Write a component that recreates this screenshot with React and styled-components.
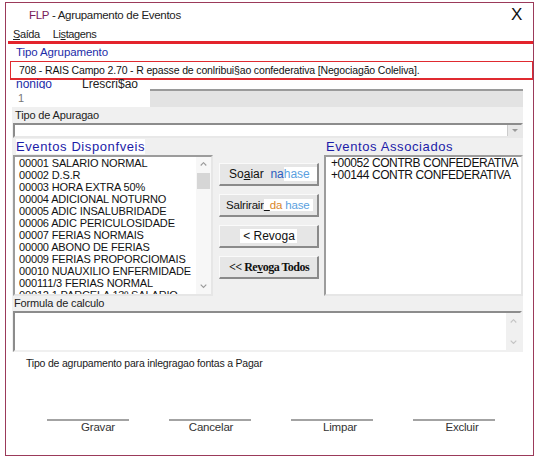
import React from 'react';
import styled, { createGlobalStyle } from 'styled-components';

const Global = createGlobalStyle`
  html, body {
    margin: 0;
    padding: 0;
    background: #fff;
  }
  body {
    font-family: "Liberation Sans", Arial, sans-serif;
    color: #1a1a1a;
  }
`;

const Window = styled.div`
  box-sizing: border-box;
  width: 529px;
  height: 454px;
  margin: 2px 0 0 5px;
  border: 1px solid #9b3a5a;
  background: #fff;
  display: flex;
  flex-direction: column;
`;

const TitleBar = styled.div`
  height: 23px;
  display: flex;
  align-items: center;
  justify-content: space-between;
  padding: 0 11px 0 23px;
  font-size: 11.5px;
  letter-spacing: -0.3px;
  color: #222;
  b {
    font-weight: normal;
    color: #7a1d5a;
  }
`;

const Close = styled.span`
  font-size: 17px;
  color: #111;
`;

const MenuBar = styled.div`
  height: 15px;
  display: flex;
  align-items: center;
  gap: 13px;
  padding-left: 7px;
  font-size: 11px;
  letter-spacing: -0.4px;
  color: #222;
`;

const RedRule = styled.div`
  height: 3px;
  margin-left: 2px;
  background: #e3232c;
`;

const GroupLabel = styled.div`
  height: 17px;
  line-height: 17px;
  padding-left: 10px;
  font-size: 11.5px;
  letter-spacing: -0.1px;
  color: #1c2ca8;
`;

const GroupField = styled.div`
  box-sizing: border-box;
  height: 19px;
  margin-left: 4px;
  border: 1px solid #e02a30;
  border-bottom-width: 2px;
  padding-left: 8px;
  font-size: 10.5px;
  letter-spacing: -0.15px;
  line-height: 16px;
  color: #111;
  white-space: nowrap;
  overflow: hidden;
`;

const CodeLabels = styled.div`
  height: 9px;
  display: flex;
  font-size: 12px;
  line-height: 8px;
  padding-left: 10px;
`;

const CodeLabel = styled.span`
  width: ${p => p.$w || 'auto'};
  color: ${p => (p.$blue ? '#1c2ca8' : '#222')};
`;

const FieldRow = styled.div`
  height: 18px;
  display: flex;
  padding-left: 6px;
`;

const CodeField = styled.div`
  width: 138px;
  background: #fff;
  color: #777;
  font-size: 11px;
  line-height: 18px;
  padding-left: 6px;
  box-sizing: border-box;
`;

const DescField = styled.div`
  width: 373px;
  background: #e3e3e3;
  border-top: 2px solid #9a9a9a;
  box-sizing: border-box;
`;

const Panel = styled.div`
  width: 511px;
  height: 245px;
  margin-left: 6px;
  background: #f0f0f0;
  display: flex;
  flex-direction: column;
`;

const SmallLabel = styled.div`
  height: ${p => p.$h}px;
  line-height: ${p => p.$h}px;
  padding-left: ${p => p.$pad}px;
  font-size: 11px;
  letter-spacing: -0.15px;
  color: #222;
`;

const Combo = styled.div`
  box-sizing: border-box;
  height: 15px;
  width: 510px;
  margin-left: 1px;
  background: #fff;
  border: 2px solid;
  border-color: #8c8c8c #e8e8e8 #e8e8e8 #8c8c8c;
  display: flex;
  justify-content: flex-end;
`;

const ComboButton = styled.div`
  width: 13px;
  background: #e8e8e8;
  border-left: 1px solid #ccc;
  display: flex;
  align-items: center;
  justify-content: center;
`;

const Columns = styled.div`
  display: flex;
  padding-left: 1px;
  height: 158px;
`;

const ListColumn = styled.div`
  width: ${p => p.$w}px;
  display: flex;
  flex-direction: column;
`;

const SectionTitle = styled.div`
  height: 17px;
  line-height: 18px;
  padding-left: ${p => p.$pad}px;
  font-size: 13px;
  letter-spacing: 0.6px;
  color: #1c1ca8;
  span {
    background: #fff;
  }
`;

const ListBox = styled.div`
  box-sizing: border-box;
  height: 141px;
  background: #fff;
  border: 2px solid;
  border-color: #9c9c9c #e6e6e6 #e6e6e6 #9c9c9c;
  display: flex;
  overflow: hidden;
`;

const Items = styled.div`
  flex: 1;
  height: 137px;
  padding-left: ${p => p.$pad}px;
  font-size: ${p => p.$size}px;
  letter-spacing: ${p => p.$ls}px;
  line-height: 12px;
  color: #111;
  white-space: nowrap;
  overflow: hidden;
`;

const ScrollBar = styled.div`
  width: ${p => p.$w}px;
  background: ${p => p.$bg};
  display: flex;
  flex-direction: column;
  justify-content: space-between;
  align-items: center;
  position: relative;
`;

const Arrow = styled.div`
  height: ${p => p.$h}px;
  display: flex;
  align-items: center;
  justify-content: center;
`;

const Thumb = styled.div`
  position: absolute;
  top: 16px;
  left: 1px;
  right: 1px;
  height: 16px;
  background: #d6d6d6;
`;

const ButtonColumn = styled.div`
  width: 100px;
  margin: 0 5px 0 6px;
  padding-top: 25px;
  display: flex;
  flex-direction: column;
  gap: 8px;
`;

const SideButton = styled.div`
  box-sizing: border-box;
  height: 23px;
  display: flex;
  align-items: center;
  justify-content: ${p => (p.$center ? 'center' : 'flex-start')};
  padding-left: ${p => p.$pad || 0}px;
  background: #e6e6e6;
  border: 1px solid;
  border-color: #fafafa #8a8a8a #8a8a8a #fafafa;
  border-right-width: 2px;
  border-bottom-width: 2px;
  font-size: ${p => p.$size || 12}px;
  letter-spacing: ${p => p.$ls || 0}px;
  font-family: ${p => (p.$serif ? '"Liberation Serif", "Times New Roman", serif' : 'inherit')};
  font-weight: ${p => (p.$serif ? 'bold' : 'normal')};
  color: #111;
  white-space: pre;
`;

const Tint = styled.span`
  color: ${p => p.$c || 'inherit'};
  background: ${p => (p.$hl ? '#fff' : 'transparent')};
  padding-right: ${p => p.$pr || 0}px;
  padding-left: ${p => p.$pl || 0}px;
`;

const FormulaBox = styled.div`
  box-sizing: border-box;
  height: 41px;
  width: 509px;
  margin-left: 1px;
  background: #fff;
  border: 2px solid;
  border-color: #8c8c8c #f0f0f0 #f0f0f0 #8c8c8c;
  display: flex;
  justify-content: flex-end;
`;

const Info = styled.div`
  height: 13px;
  line-height: 13px;
  margin: 5px 0 0 20px;
  font-size: 10.5px;
  letter-spacing: -0.2px;
  color: #1a1a1a;
`;

const Footer = styled.div`
  display: flex;
  gap: 40px;
  margin: 49px 0 0 41px;
`;

const FooterButton = styled.div`
  width: 82px;
  &::before {
    content: '';
    display: block;
    height: 2px;
    background: #a3a3a3;
  }
  span {
    display: block;
    padding-left: ${p => p.$shift}px;
    text-align: center;
    font-size: 11.5px;
    letter-spacing: -0.2px;
    line-height: 13px;
    color: #333;
    white-space: nowrap;
  }
`;

const Chevron = ({ up, color = '#9a9a9a', size = 7 }) => (
  <svg width={size} height={size * 0.6} viewBox="0 0 10 6">
    <polyline
      points={up ? '1,5 5,1 9,5' : '1,1 5,5 9,1'}
      fill="none"
      stroke={color}
      strokeWidth="1.6"
    />
  </svg>
);

const available = [
  '00001 SALARIO NORMAL',
  '00002 D.S.R',
  '00003 HORA EXTRA 50%',
  '00004 ADICIONAL NOTURNO',
  '00005 ADIC INSALUBRIDADE',
  '00006 ADIC PERICULOSIDADE',
  '00007 FERIAS NORMAIS',
  '00000 ABONO DE FERIAS',
  '00009 FERIAS PROPORCIOMAIS',
  '00010 NUAUXILIO ENFERMIDADE',
  '000111/3 FERIAS NORMAL',
  '00012 1 PARCELA 13º SALARIO',
];

const associated = ['+00052 CONTRB CONFEDERATIVA', '+00144 CONTR CONFEDERATIVA'];

const App = () => {
  return (
    <>
      <Global />
      <Window>
        <TitleBar>
          <span>
            <b>FLP</b> - Agrupamento de Eventos
          </span>
          <Close>X</Close>
        </TitleBar>
        <MenuBar>
          <span>
            <u>S</u>aída
          </span>
          <span>
            Li<u>s</u>tagens
          </span>
        </MenuBar>
        <RedRule />
        <GroupLabel>Tipo Agrupamento</GroupLabel>
        <GroupField>
          708 - RAIS Campo 2.70 - R epasse de conlribui§ao confederativa [Negociagão Coleliva].
        </GroupField>
        <CodeLabels>
          <CodeLabel $blue $w="66px">nonigo</CodeLabel>
          <CodeLabel>Lrescri$ao</CodeLabel>
        </CodeLabels>
        <FieldRow>
          <CodeField>1</CodeField>
          <DescField />
        </FieldRow>

        <Panel>
          <SmallLabel $h={16} $pad={3}>Tipo de Apuragao</SmallLabel>
          <Combo>
            <ComboButton>
              <svg width="6" height="4" viewBox="0 0 6 4">
                <polygon points="0,0 6,0 3,3" fill="#9a9a9a" />
              </svg>
            </ComboButton>
          </Combo>

          <Columns>
            <ListColumn $w={200}>
              <SectionTitle $pad={3}>
                <span>Eventos Disponfveis</span>
              </SectionTitle>
              <ListBox>
                <Items $pad={4} $size={11} $ls={-0.15}>
                  {available.map(item => (
                    <div key={item}>{item}</div>
                  ))}
                </Items>
                <ScrollBar $w={15} $bg="#f7f7f7">
                  <Arrow $h={15}>
                    <Chevron up />
                  </Arrow>
                  <Thumb />
                  <Arrow $h={15}>
                    <Chevron />
                  </Arrow>
                </ScrollBar>
              </ListBox>
            </ListColumn>

            <ButtonColumn>
              <SideButton $pad={9}>
                <Tint>
                  So<u>a</u>iar
                </Tint>
                <Tint $c="#2a5cc0">{'  na'}</Tint>
                <Tint $c="#5b9fe0" $hl $pr={7}>
                  hase
                </Tint>
              </SideButton>
              <SideButton $pad={6} $size={11.5} $ls={-0.2}>
                <Tint>Salrirair</Tint>
                <Tint $hl $pr={4}>
                  <u>{'  '}</u>
                  <Tint $c="#d9862a">da</Tint> <Tint $c="#5b9fe0">hase</Tint>
                </Tint>
              </SideButton>
              <SideButton $center>
                <Tint $hl $pl={3} $pr={2}>
                  &lt; Revoga
                </Tint>
              </SideButton>
              <SideButton $pad={9} $serif $size={12} $ls={-0.5}>
                &lt;&lt; Re<u>v</u>oga Todos
              </SideButton>
            </ButtonColumn>

            <ListColumn $w={199}>
              <SectionTitle $pad={2}>Eventos Associados</SectionTitle>
              <ListBox>
                <Items $pad={5} $size={12} $ls={-0.4}>
                  {associated.map(item => (
                    <div key={item}>{item}</div>
                  ))}
                </Items>
              </ListBox>
            </ListColumn>
          </Columns>

          <SmallLabel $h={15} $pad={2}>Formula de calculo</SmallLabel>
          <FormulaBox>
            <ScrollBar $w={14} $bg="#f0f0f0">
              <Arrow $h={16}>
                <Chevron up color="#c4c4c4" />
              </Arrow>
              <Arrow $h={16}>
                <Chevron color="#c4c4c4" />
              </Arrow>
            </ScrollBar>
          </FormulaBox>
        </Panel>

        <Info>Tipo de agrupamento para inlegragao fontas a Pagar</Info>

        <Footer>
          <FooterButton $shift={20}>
            <span>Gravar</span>
          </FooterButton>
          <FooterButton $shift={2}>
            <span>Cancelar</span>
          </FooterButton>
          <FooterButton $shift={16}>
            <span>Limpar</span>
          </FooterButton>
          <FooterButton $shift={16}>
            <span>Excluir</span>
          </FooterButton>
        </Footer>
      </Window>
    </>
  );
};

export default App;
